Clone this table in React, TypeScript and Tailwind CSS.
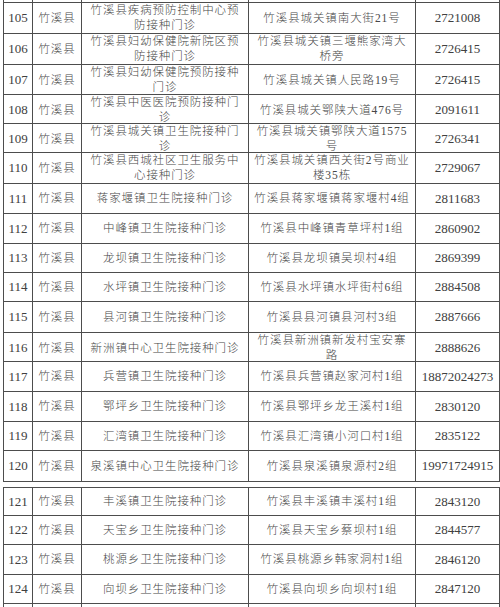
import React from "react";

type Row = { n: string; h: number; name: string[]; addr: string[]; tel: string };

const top: Row[] = [
  { n: "105", h: 31, name: ["竹溪县疾病预防控制中心预", "防接种门诊"], addr: ["竹溪县城关镇南大街21号"], tel: "2721008" },
  { n: "106", h: 31, name: ["竹溪县妇幼保健院新院区预", "防接种门诊"], addr: ["竹溪县城关镇三堰熊家湾大", "桥旁"], tel: "2726415" },
  { n: "107", h: 30, name: ["竹溪县妇幼保健院预防接种", "门诊"], addr: ["竹溪县城关镇人民路19号"], tel: "2726415" },
  { n: "108", h: 29, name: ["竹溪县中医医院预防接种门", "诊"], addr: ["竹溪县城关鄂陕大道476号"], tel: "2091611" },
  { n: "109", h: 29, name: ["竹溪县城关镇卫生院接种门", "诊"], addr: ["竹溪县城关镇鄂陕大道1575", "号"], tel: "2726341" },
  { n: "110", h: 31, name: ["竹溪县西城社区卫生服务中", "心接种门诊"], addr: ["竹溪县城关镇西关街2号商业", "楼35栋"], tel: "2729067" },
  { n: "111", h: 30, name: ["蒋家堰镇卫生院接种门诊"], addr: ["竹溪县蒋家堰镇蒋家堰村4组"], tel: "2811683" },
  { n: "112", h: 30, name: ["中峰镇卫生院接种门诊"], addr: ["竹溪县中峰镇青草坪村1组"], tel: "2860902" },
  { n: "113", h: 29, name: ["龙坝镇卫生院接种门诊"], addr: ["竹溪县龙坝镇吴坝村4组"], tel: "2869399" },
  { n: "114", h: 29, name: ["水坪镇卫生院接种门诊"], addr: ["竹溪县水坪镇水坪街村6组"], tel: "2884508" },
  { n: "115", h: 31, name: ["县河镇卫生院接种门诊"], addr: ["竹溪县县河镇县河村3组"], tel: "2887666" },
  { n: "116", h: 29, name: ["新洲镇中心卫生院接种门诊"], addr: ["竹溪县新洲镇新发村宝安寨", "路"], tel: "2888626" },
  { n: "117", h: 30, name: ["兵营镇卫生院接种门诊"], addr: ["竹溪县兵营镇赵家河村1组"], tel: "18872024273" },
  { n: "118", h: 30, name: ["鄂坪乡卫生院接种门诊"], addr: ["竹溪县鄂坪乡龙王溪村1组"], tel: "2830120" },
  { n: "119", h: 29, name: ["汇湾镇卫生院接种门诊"], addr: ["竹溪县汇湾镇小河口村1组"], tel: "2835122" },
  { n: "120", h: 31, name: ["泉溪镇中心卫生院接种门诊"], addr: ["竹溪县泉溪镇泉源村2组"], tel: "19971724915" },
];

const bottom: Row[] = [
  { n: "121", h: 28, name: ["丰溪镇卫生院接种门诊"], addr: ["竹溪县丰溪镇丰溪村1组"], tel: "2843120" },
  { n: "122", h: 29, name: ["天宝乡卫生院接种门诊"], addr: ["竹溪县天宝乡蔡坝村1组"], tel: "2844577" },
  { n: "123", h: 30, name: ["桃源乡卫生院接种门诊"], addr: ["竹溪县桃源乡韩家洞村1组"], tel: "2846120" },
  { n: "124", h: 29, name: ["向坝乡卫生院接种门诊"], addr: ["竹溪县向坝乡向坝村1组"], tel: "2847120" },
];

const font = { fontFamily: '"Liberation Serif", "Noto Sans CJK SC", serif' };

const cols = "grid grid-cols-[29px_49px_167px_167px_84px]";
const cell = "border-r border-[#4d4d4d] flex items-center justify-center text-center";

function Lines({ lines }: { lines: string[] }) {
  return (
    <div className="flex flex-col items-center leading-[15px] text-[11.5px] tracking-[0.9px] font-light text-[#474747]">
      {lines.map((l, i) => (
        <span key={i} className="whitespace-nowrap">
          {l}
        </span>
      ))}
    </div>
  );
}

function TableRow({ r }: { r: Row }) {
  return (
    <div className={`${cols} border-b border-[#4d4d4d]`} style={{ height: r.h }}>
      <div className={`${cell} text-[13px]`}>{r.n}</div>
      <div className={cell}>
        <Lines lines={["竹溪县"]} />
      </div>
      <div className={cell}>
        <Lines lines={r.name} />
      </div>
      <div className={cell}>
        <Lines lines={r.addr} />
      </div>
      <div className={`${cell} text-[13px]`}>{r.tel}</div>
    </div>
  );
}

function Stub({ h }: { h: number }) {
  return (
    <div className={cols} style={{ height: h }}>
      <div className="border-r border-[#4d4d4d]" />
      <div className="border-r border-[#4d4d4d]" />
      <div className="border-r border-[#4d4d4d]" />
      <div className="border-r border-[#4d4d4d]" />
      <div className="border-r border-[#4d4d4d]" />
    </div>
  );
}

export default function App() {
  return (
    <div className="w-[500px] h-[607px] overflow-hidden bg-white text-[#404040]" style={font}>
      <div className="ml-[3px] w-[497px]">
        <div className="border-l border-[#4d4d4d]">
          <Stub h={2} />
        </div>
        <div className="border-l border-t border-[#4d4d4d]">
          {top.map((r) => (
            <TableRow key={r.n} r={r} />
          ))}
        </div>
        <div className="h-[5px]" />
        <div className="border-l border-t border-[#4d4d4d]">
          {bottom.map((r) => (
            <TableRow key={r.n} r={r} />
          ))}
          <Stub h={6} />
        </div>
      </div>
    </div>
  );
}
